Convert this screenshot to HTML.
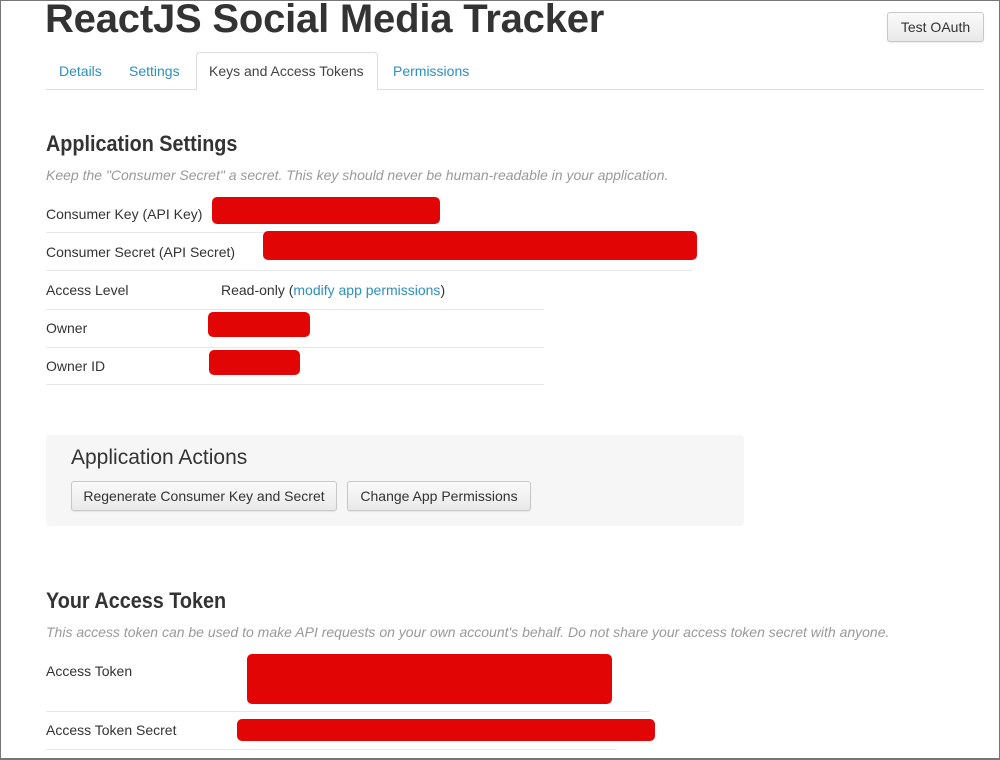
<!DOCTYPE html>
<html><head><style>
*{margin:0;padding:0;box-sizing:border-box}
body{width:1000px;height:760px;overflow:hidden;background:#fff;font-family:"Liberation Sans",sans-serif;color:#333;position:relative}
.frame{position:absolute;left:0;top:0;width:1000px;height:760px;border:1px solid #777;border-bottom:2px solid #777}
.a{position:absolute;white-space:nowrap}
.red{position:absolute;background:#e20505;border-radius:5px}
.line{position:absolute;height:1px;background:#e8e8e8}
.btn{position:absolute;border:1px solid #c8c8c8;border-radius:3px;background:linear-gradient(#fafafa,#e9e9e9);font-size:14px;color:#333;text-align:center;box-shadow:0 1px 1px rgba(0,0,0,.08)}
.lbl{font-size:14px;color:#333}
.it{font-size:14px;font-style:italic;color:#999}
.h2{font-size:22px;font-weight:bold;color:#333;transform:scaleX(0.9);transform-origin:0 0}
.tab{font-size:14px;color:#2b8fc0}
</style></head><body>
<div class="frame"></div>
<div class="a" style="left:45px;top:-3px;font-size:40px;font-weight:bold;color:#333;letter-spacing:-0.2px">ReactJS Social Media Tracker</div>
<div class="btn" style="left:887px;top:12px;width:97px;height:30px;line-height:28px">Test OAuth</div>

<div class="line" style="left:46px;top:89px;width:938px;background:#ddd"></div>
<div class="a" style="left:196px;top:52px;width:182px;height:38px;border:1px solid #ddd;border-bottom:none;border-radius:4px 4px 0 0;background:#fff"></div>
<div class="a tab" style="left:59px;top:63px">Details</div>
<div class="a tab" style="left:129px;top:63px">Settings</div>
<div class="a tab" style="left:209px;top:63px;color:#444">Keys and Access Tokens</div>
<div class="a tab" style="left:393px;top:63px">Permissions</div>

<div class="a h2" style="left:46px;top:131px">Application Settings</div>
<div class="a it" style="left:46px;top:167px">Keep the "Consumer Secret" a secret. This key should never be human-readable in your application.</div>

<div class="a lbl" style="left:46px;top:206px">Consumer Key (API Key)</div>
<div class="red" style="left:212px;top:197px;width:228px;height:27px"></div>
<div class="line" style="left:46px;top:232px;width:646px"></div>
<div class="a lbl" style="left:46px;top:244px">Consumer Secret (API Secret)</div>
<div class="red" style="left:263px;top:231px;width:434px;height:29px"></div>
<div class="line" style="left:46px;top:270px;width:646px"></div>
<div class="a lbl" style="left:46px;top:282px">Access Level</div>
<div class="a lbl" style="left:221px;top:282px">Read-only (<span style="color:#2b8fc0">modify app permissions</span>)</div>
<div class="line" style="left:46px;top:309px;width:498px"></div>
<div class="a lbl" style="left:46px;top:320px">Owner</div>
<div class="red" style="left:208px;top:312px;width:102px;height:25px"></div>
<div class="line" style="left:46px;top:347px;width:498px"></div>
<div class="a lbl" style="left:46px;top:358px">Owner ID</div>
<div class="red" style="left:209px;top:350px;width:91px;height:25px"></div>
<div class="line" style="left:46px;top:384px;width:498px"></div>

<div class="a" style="left:46px;top:435px;width:698px;height:91px;background:#f6f6f6;border-radius:4px"></div>
<div class="a" style="left:71px;top:446px;font-size:21px;color:#333">Application Actions</div>
<div class="btn" style="left:71px;top:481px;width:266px;height:30px;line-height:28px">Regenerate Consumer Key and Secret</div>
<div class="btn" style="left:347px;top:481px;width:184px;height:30px;line-height:28px">Change App Permissions</div>

<div class="a h2" style="left:46px;top:588px">Your Access Token</div>
<div class="a it" style="left:46px;top:624px">This access token can be used to make API requests on your own account's behalf. Do not share your access token secret with anyone.</div>
<div class="a lbl" style="left:46px;top:663px">Access Token</div>
<div class="red" style="left:247px;top:654px;width:365px;height:50px"></div>
<div class="line" style="left:46px;top:711px;width:604px"></div>
<div class="a lbl" style="left:46px;top:722px">Access Token Secret</div>
<div class="red" style="left:237px;top:719px;width:418px;height:22px"></div>
<div class="line" style="left:46px;top:749px;width:571px"></div>
</body></html>
